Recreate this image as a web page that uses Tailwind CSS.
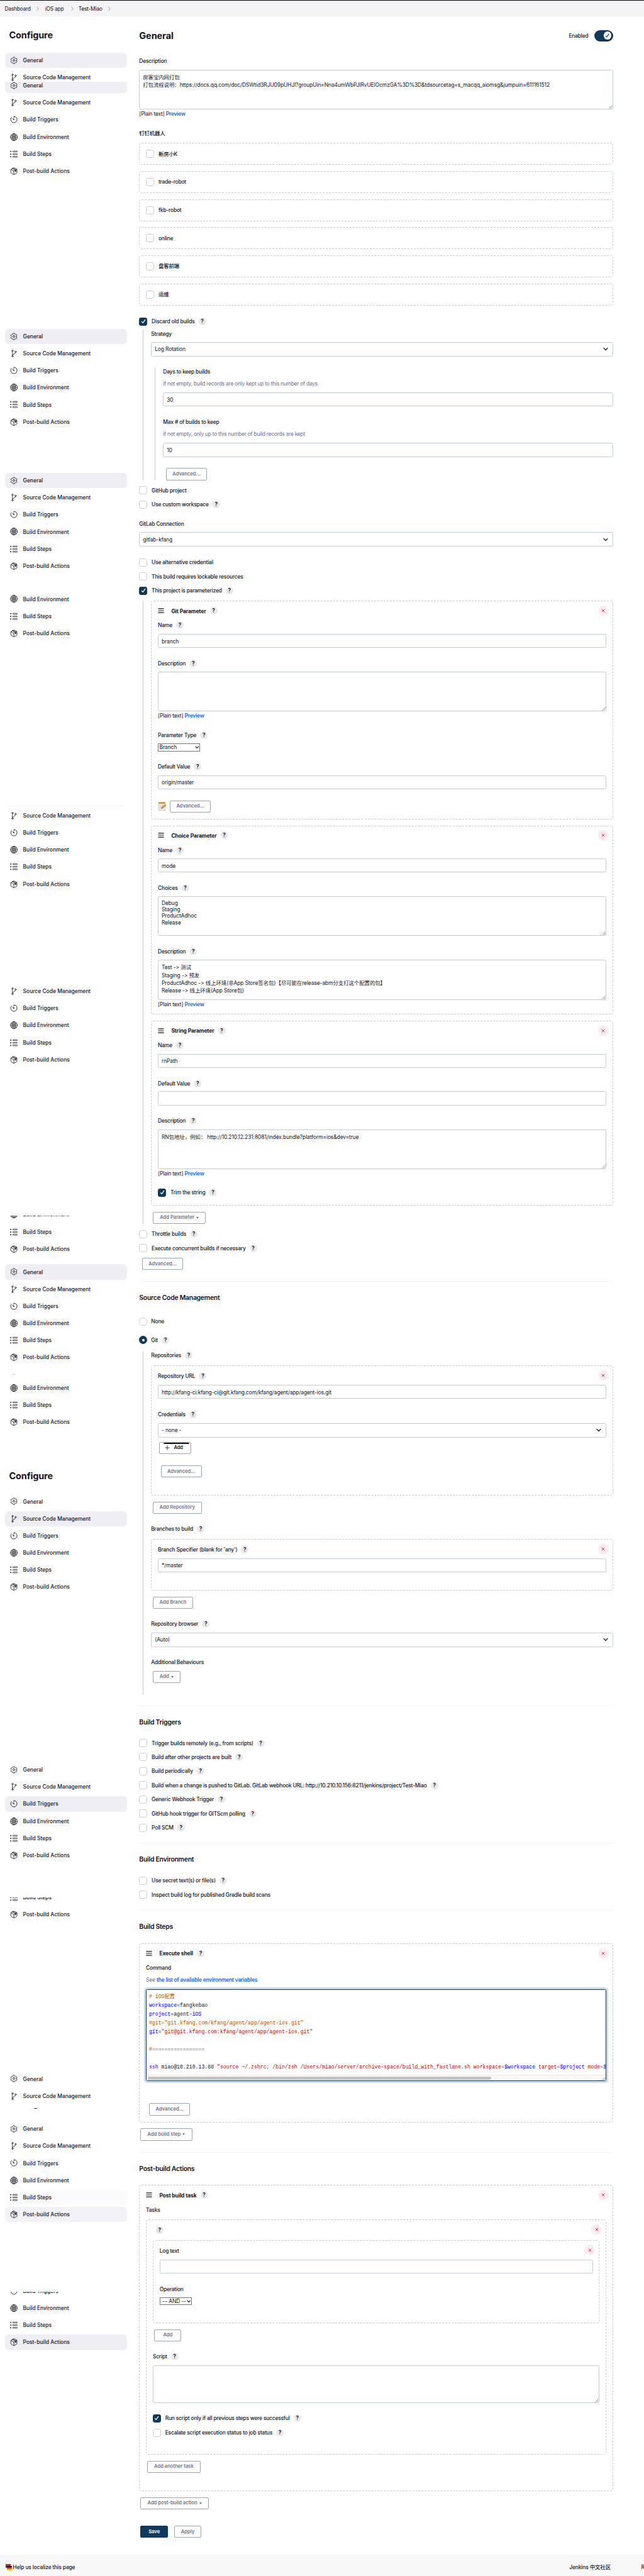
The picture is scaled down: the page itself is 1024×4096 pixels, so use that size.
<!DOCTYPE html>
<html lang="en">
<head>
<meta charset="utf-8">
<title>Test-Miao Config [Jenkins]</title>
<script src="https://cdn.jsdelivr.net/npm/@tailwindcss/browser@4"></script>
</head>
<body class="w-[1024px] h-[4096px] overflow-hidden bg-white text-[#14141f] font-['Inter','Noto_Sans_CJK_SC',sans-serif] text-[8.46px] leading-3 tracking-[-0.21px] flex flex-col">

<svg class="hidden" xmlns="http://www.w3.org/2000/svg">
  <symbol id="i-gear" viewBox="0 0 512 512"><path fill="none" stroke="currentColor" stroke-width="34" stroke-linecap="round" stroke-linejoin="round" d="M262.29 192.31a64 64 0 1057.4 57.4 64.13 64.13 0 00-57.4-57.4zM416.39 256a154.34 154.34 0 01-1.53 20.79l45.21 35.46a10.81 10.81 0 012.45 13.75l-42.77 74a10.81 10.81 0 01-13.14 4.59l-44.9-18.08a16.11 16.11 0 00-15.17 1.75A164.48 164.48 0 01325 400.8a15.94 15.94 0 00-8.82 12.14l-6.73 47.89a11.08 11.08 0 01-10.68 9.17h-85.54a11.11 11.11 0 01-10.69-8.87l-6.72-47.82a16.07 16.07 0 00-9-12.22 155.3 155.3 0 01-21.46-12.57 16 16 0 00-15.11-1.71l-44.89 18.07a10.81 10.81 0 01-13.14-4.58l-42.77-74a10.8 10.8 0 012.45-13.75l38.21-30a16.05 16.05 0 006-14.08c-.36-4.17-.58-8.33-.58-12.5s.21-8.27.58-12.35a16 16 0 00-6.07-13.94l-38.19-30A10.81 10.81 0 0149.48 186l42.77-74a10.81 10.81 0 0113.14-4.59l44.9 18.08a16.11 16.11 0 0015.17-1.75A164.48 164.48 0 01187 111.2a15.94 15.94 0 008.82-12.14l6.73-47.89A11.08 11.08 0 01213.23 42h85.54a11.11 11.11 0 0110.69 8.87l6.72 47.82a16.07 16.07 0 009 12.22 155.3 155.3 0 0121.46 12.57 16 16 0 0015.11 1.71l44.89-18.07a10.81 10.81 0 0113.14 4.58l42.77 74a10.8 10.8 0 01-2.45 13.75l-38.21 30a16.05 16.05 0 00-6.05 14.08c.33 4.14.55 8.3.55 12.47z"/></symbol>
  <symbol id="i-branch" viewBox="0 0 512 512"><g fill="none" stroke="currentColor" stroke-width="34" stroke-linecap="round"><circle cx="160" cy="70" r="46"/><circle cx="160" cy="442" r="46"/><circle cx="366" cy="140" r="46"/><path d="M160 396V116M366 186c0 130-206 70-206 210"/></g></symbol>
  <symbol id="i-timer" viewBox="0 0 512 512"><path fill="none" stroke="currentColor" stroke-width="36" stroke-linecap="round" stroke-linejoin="round" d="M96 112A210 210 0 0046 254c-1 116 94 210 210 210s210-94 210-210S374 44 258 42v92"/><path fill="currentColor" d="M233.38 278.63l-79-113a8.13 8.13 0 0111.32-11.32l113 79a32.5 32.5 0 01-37.25 53.26 33.21 33.21 0 01-8.07-7.94z"/></symbol>
  <symbol id="i-globe" viewBox="0 0 512 512"><g fill="none" stroke="currentColor" stroke-width="34"><circle cx="256" cy="256" r="232"/><ellipse cx="256" cy="256" rx="112" ry="232"/><path d="M256 24v464M24 256h464M76 126c50 34 112 54 180 54s130-20 180-54M76 386c50-34 112-54 180-54s130 20 180 54"/></g></symbol>
  <symbol id="i-steps" viewBox="0 0 512 512"><g fill="none" stroke="currentColor" stroke-width="28" stroke-linejoin="round"><rect x="172" y="46" width="324" height="64" rx="32"/><rect x="172" y="224" width="324" height="64" rx="32"/><rect x="172" y="402" width="324" height="64" rx="32"/><path d="M18 44l72 34-72 34zM18 222l72 34-72 34zM18 400l72 34-72 34z"/></g></symbol>
  <symbol id="i-cube" viewBox="0 0 512 512"><g fill="none" stroke="currentColor" stroke-width="34" stroke-linecap="round" stroke-linejoin="round"><path d="M440 130L278 34a44 44 0 00-44 0L72 130a44 44 0 00-22 38v184a44 44 0 0022 38l162 96a44 44 0 0044 0l162-96a44 44 0 0022-38V168a44 44 0 00-22-38zM58 146l198 114 198-114M256 490V260M150 80l208 120v100l44-26V172L196 56"/></g></symbol>
  <symbol id="i-check" viewBox="0 0 12 12"><path fill="none" stroke="currentColor" stroke-width="1.3" stroke-linecap="round" stroke-linejoin="round" d="M3.4 6.6L5.2 8.4 8.7 3.6"/></symbol>
  <symbol id="i-x" viewBox="0 0 12 12"><path fill="none" stroke="currentColor" stroke-width="1.6" stroke-linecap="round" d="M2 2l8 8M10 2L2 10"/></symbol>
  <symbol id="i-down" viewBox="0 0 12 12"><path fill="none" stroke="currentColor" stroke-width="2" stroke-linecap="round" stroke-linejoin="round" d="M1.5 3.5L6 8.5l4.5-5"/></symbol>
  <symbol id="i-crumb" viewBox="0 0 6 12"><path fill="none" stroke="currentColor" stroke-width="1.3" stroke-linecap="round" stroke-linejoin="round" d="M1 1.5L4.6 6 1 10.5"/></symbol>
  <symbol id="i-grip" viewBox="0 0 10 10"><path fill="none" stroke="currentColor" stroke-width="1.2" stroke-linecap="round" d="M.8 1.8h8.4M.8 5h8.4M.8 8.2h8.4"/></symbol>
  <symbol id="i-resize" viewBox="0 0 6 6"><path fill="none" stroke="#666" stroke-width=".7" d="M.5 5.5l5-5M3 5.5L5.5 3"/></symbol>
  <symbol id="i-note" viewBox="0 0 14 14"><rect x="1" y=".5" width="11" height="13" rx="1" fill="#e9e9e6" stroke="#b9b9b4" stroke-width=".6"/><rect x="1" y=".5" width="11" height="2.6" fill="#c9a227"/><path d="M3 5.5h6M3 7.5h4M3 9.5h3" stroke="#bbb" stroke-width=".6"/><path d="M5.4 10.8l.6-2 5.6-4.6 1.4 1.5-5.6 4.5z" fill="#e08a2e" stroke="#8a4b12" stroke-width=".4"/></symbol>
  <symbol id="i-lang" viewBox="0 0 10 10"><path d="M0 0h8v6H0z" fill="#2c4a9a"/><path d="M0 1.5h8M3 0v6" stroke="#e33" stroke-width="1"/><path d="M2 3h8v2.4H2z" fill="#222"/><path d="M2 5.4h8v2.3H2z" fill="#d22"/><path d="M2 7.7h8V10H2z" fill="#f2c500"/></symbol>
</svg>

<header class="h-[26.4px] shrink-0 border-t border-black bg-[#f4f4f7] flex items-center pl-[7.4px] tracking-[-0.26px]" id="crumbs"></header>

<div class="flex h-[4037px] shrink-0">
  <aside class="w-[221.3px] shrink-0 pl-[7.9px] pr-[19.4px] flex flex-col tracking-normal" id="side"></aside>
  <main class="w-[753.7px] shrink-0 flex flex-col items-stretch" id="main"></main>
</div>

<footer class="flex-1 bg-[#f8f8f8] border-t border-[#f2f2f2] flex items-center pl-[8.5px] pt-1 whitespace-nowrap font-medium tracking-[-0.15px]">
  <svg class="size-[10px] shrink-0"><use href="#i-lang"/></svg>
  <span class="ml-[1.8px] w-[885px] shrink-0">Help us localize this page</span>
  <span class="w-[114.2px] shrink-0">Jenkins 中文社区</span>
  <span class="shrink-0">REST API</span>
</footer>

<script>
const use = (id, cls) => `<svg class="${cls} shrink-0"><use href="#i-${id}"/></svg>`;
const help = (cls = 'ml-[6px]') => `<span class="${cls} size-3 rounded-full bg-[#e8e8e8] flex items-center justify-center text-[8.4px] font-semibold tracking-normal shrink-0">?</span>`;

/* ---------- breadcrumbs ---------- */
document.getElementById('crumbs').innerHTML =
  `<span class="w-[51px]">Dashboard</span>${use('crumb', 'w-[4px] h-2 text-[#8d8d98]')}
   <span class="w-[41px] ml-[9.4px]">iOS app</span>${use('crumb', 'w-[4px] h-2 text-[#8d8d98]')}
   <span class="w-[47px] ml-[7.9px]">Test-Miao</span>${use('crumb', 'w-[4px] h-2 text-[#8d8d98]')}`;

/* ---------- sidebar ---------- */
const NAV = [['gear', 'General'], ['branch', 'Source Code Management'], ['timer', 'Build Triggers'], ['globe', 'Build Environment'], ['steps', 'Build Steps'], ['cube', 'Post-build Actions']];
const item = (i, tone = '') => `<a class="h-[24.2px] my-[1.5px] shrink-0 rounded-[6px] flex items-center pl-[8.4px] font-medium ${tone}">${use(NAV[i][0], 'size-[12.2px]')}<span class="ml-[8.1px] whitespace-nowrap">${NAV[i][1]}</span></a>`;
const items = (from, to, active = -1, tone = 'bg-[#eeeef4]') => { let s = ''; for (let i = from; i <= to; i++) s += item(i, i === active ? tone : ''); return s; };
const nav = (cls, body) => `<nav class="${cls} shrink-0 overflow-hidden flex flex-col">${body}</nav>`;
const title = (cls) => `<h1 class="${cls} h-6 leading-6 shrink-0 pl-[6.6px] mb-[14.6px] text-[14.5px] font-bold tracking-[-0.16px]">Configure</h1>`;
document.getElementById('side').innerHTML =
  title('mt-[17.5px]') +
  nav('h-[48px]', items(0, 1, 0)) +
  nav('h-[155.1px] justify-end', items(0, 5, 0)) +
  nav('mt-[235.6px]', items(0, 5, 0)) +
  nav('mt-[66.1px]', items(0, 5, 0)) +
  nav('mt-[25.4px]', items(3, 5)) +
  nav('mt-[260.1px] h-[138.7px] justify-end', items(0, 5, 0)) +
  nav('mt-[143.2px]', items(1, 5)) +
  nav('mt-[234.7px] h-[66.4px] justify-end', items(3, 5)) +
  nav('mt-[9.5px]', items(0, 5, 0)) +
  nav('mt-[12.9px] h-[89.9px] justify-end', items(2, 5)) +
  title('mt-[60.5px]') +
  nav('', items(0, 5, 1)) +
  nav('mt-[263.4px]', items(0, 5, 2)) +
  nav('mt-[53.2px] h-[40.7px] justify-end', items(4, 5)) +
  nav('mt-[234.5px]', items(0, 1)) +
  nav('mt-[5.6px] h-[182.8px] justify-end', title('') + items(0, 3) + item(4, 'bg-[#fafafd]') + item(5, 'bg-[#f2f2f8]')) +
  nav('mt-[109.7px] h-[93.6px] justify-end', items(2, 5, 5));

/* ---------- form pieces ---------- */
const label = (cls, text, h) => `<div class="${cls} h-3 shrink-0 flex items-center font-medium whitespace-nowrap">${text}${h ? help() : ''}</div>`;
const hint = (cls, text) => `<div class="${cls} h-3 shrink-0 text-[#73738c] tracking-[-0.26px]">${text}</div>`;
const box = (on) => on
  ? `<span class="size-[13px] rounded-[3.4px] bg-[#10395c] text-white flex items-center justify-center shrink-0">${use('check', 'size-[12px]')}</span>`
  : `<span class="size-[13px] rounded-[3.4px] border-[1.2px] border-[#c3cdd1] bg-white shrink-0"></span>`;
const check = (cls, text, on, h) => `<label class="${cls} h-[13px] shrink-0 flex items-center font-medium whitespace-nowrap">${box(on)}<span class="ml-[6.8px]">${text}</span>${h ? help() : ''}</label>`;
const radio = (cls, text, on, h) => `<label class="${cls} h-[13px] shrink-0 flex items-center font-medium">${on
  ? '<span class="size-[13px] rounded-full bg-[#10395c] flex items-center justify-center"><i class="size-[4px] rounded-full bg-white"></i></span>'
  : '<span class="size-[13px] rounded-full border border-[#c3cdd1]"></span>'}<span class="ml-[6px]">${text}</span>${h ? help() : ''}</label>`;
const input = (cls, text = '') => `<div class="${cls} h-[22.2px] shrink-0 rounded-[2.5px] border-[1.2px] border-[#c3cdd1] flex items-center pl-[4.9px] pt-[1px] whitespace-nowrap tracking-[-0.13px]">${text}</div>`;
const area = (cls, text = '') => `<div class="${cls} shrink-0 relative rounded-[2.5px] border-[1.2px] border-[#c3cdd1] pl-[4.9px] pt-[5px] whitespace-pre tracking-[-0.1px]">${text}${use('resize', 'absolute right-0 bottom-0 size-[6px]')}</div>`;
const select = (cls, text) => `<div class="${cls} h-[23px] shrink-0 rounded-[2.5px] border-[1.2px] border-[#c3cdd1] flex items-center justify-between pl-[4.9px] pr-[7px] tracking-[-0.13px]"><span>${text}</span>${use('down', 'size-[8px]')}</div>`;
const native = (cls, text) => `<div class="${cls} shrink-0 border border-[#767676] flex items-center justify-between pl-[1.5px] pr-[1px] whitespace-nowrap tracking-[-0.13px]"><span>${text}</span>${use('down', 'size-[6.5px]')}</div>`;
const button = (cls, text, caret) => `<button class="${cls} h-[19.3px] shrink-0 self-start rounded-[2px] border-[1.2px] border-[#98a6af] bg-white text-[#73738c] text-[7.6px] font-semibold tracking-normal flex items-center justify-center whitespace-nowrap">${text}${caret ? '<i class="ml-[3px] border-x-[2.3px] border-x-transparent border-t-[3.6px] border-t-[#73738c]"></i>' : ''}</button>`;
const plain = (cls) => `<div class="${cls} h-3 shrink-0">[Plain text] <a class="text-[#1f66d6] font-semibold">Preview</a></div>`;
const del = () => `<span class="ml-auto -mr-[3.8px] size-[17px] rounded-full bg-[#fdecf0] text-[#e0002d] flex items-center justify-center">${use('x', 'size-[6px]')}</span>`;
const head = (text) => `<div class="mt-[6.2px] h-[17px] shrink-0 flex items-center">${use('grip', 'size-[10px]')}<span class="ml-[11.3px] mt-[1px] font-bold tracking-[-0.1px]">${text}</span>${help()}${del()}</div>`;
const labelHead = (cls, text, h) => `<div class="${cls} h-[17px] shrink-0 flex items-center font-medium"><span class="mt-[3px]">${text}</span>${h ? help('ml-[6px] mt-[2px]') : ''}${del()}</div>`;
const card = (cls, body) => `<section class="${cls} shrink-0 flex flex-col px-[9.8px] rounded-[4.5px] border-[1.2px] border-dashed border-[#c3cdd1]">${body}</section>`;
const nest = (cls, body) => `<div class="${cls} ml-[6.2px] pl-[11.8px] shrink-0 flex flex-col border-l-[1.2px] border-[#c3cdd1]">${body}</div>`;
const rule = (cls) => `<div class="${cls} h-[1.2px] shrink-0 bg-[#f1f1f6]"></div>`;
const h2 = (cls, text) => `<h2 class="${cls} h-[14px] leading-[14px] shrink-0 text-[10.5px] font-semibold tracking-[-0.31px]">${text}</h2>`;

/* ---------- shell script editor ---------- */
const V = 'text-[#0000ff]', S = 'text-[#aa1111]', C = 'text-[#aa5500]';
const c = (cls, t) => `<span class="${cls}">${t}</span>`;
const code = [
  c(C, '# iOS配置'),
  c(V, 'workspace') + '=fangkebao',
  c(V, 'project') + '=agent' + c('text-[#0000cc]', '-iOS'),
  c(C, '#git="git.kfang.com/kfang/agent/app/agent-ios.git"'),
  c(V, 'git') + '=' + c(S, '"git@git.kfang.com:kfang/agent/app/agent-ios.git"'),
  '',
  c(C, '#================='),
  '',
  c('text-[#3300aa]', 'ssh') + ' miao@10.210.13.88 ' + c(S, '"source ~/.zshrc; /bin/zsh /Users/miao/server/archive-space/build_with_fastlane.sh workspace=') + c(V, '$workspace') + c(S, ' target=') + c(V, '$project') + c(S, ' mode=') + c(V, '$mode')
];
const editor = (cls) => `<div class="${cls} h-[146.8px] shrink-0 relative rounded-[2.5px] border-[1.2px] border-[#10395c] ring-[3px] ring-[#cbdce7] overflow-hidden flex flex-col tracking-normal">
  <div class="flex-1 pt-[4px] pl-[3.8px] text-[8.2px] font-['Liberation_Mono','Noto_Sans_CJK_SC',monospace]">${code.map(l => `<div class="h-[14.02px] leading-[14px] whitespace-pre">${l}</div>`).join('')}</div>
  <div class="h-[9px] bg-[#fafafa] border-t border-[#e8e8e8] pl-[2.4px] flex items-center"><i class="w-[546px] h-[5px] rounded-full bg-[#c3c3c3]"></i></div>
  ${use('resize', 'absolute right-0 bottom-0 size-[6px]')}</div>`;

/* ---------- main form ---------- */
document.getElementById('main').innerHTML = [
  `<div class="mt-[21.3px] h-[18px] shrink-0 flex items-center"><h1 class="text-[14.5px] font-bold tracking-[-0.09px] mt-[1px]">General</h1><span class="ml-auto mr-[9.5px] font-medium">Enabled</span><span class="w-[30px] h-[18px] rounded-full bg-[#10395c] flex items-center justify-end pr-[2.8px]"><i class="size-[12.4px] rounded-full bg-white text-[#10395c] flex items-center justify-center">${use('check', 'size-[11px]')}</i></span></div>`,
  label('mt-[25.5px]', 'Description'),
  area('mt-[7.5px] h-[63.1px] leading-[12.1px]', '房客宝内网打包\n打包流程说明：https://docs.qq.com/doc/DSWtid3RJU09pUHJl?groupUin=Nna4umWbPJIRvUEIOcmzGA%3D%3D&amp;tdsourcetag=s_macqq_aiomsg&amp;jumpuin=611161512'),
  plain('mt-[1px]'),
  label('mt-[18.8px]', '钉钉机器人'),
  `<div class="mt-[9.6px] flex flex-col gap-[9.7px]">${['新房小K', 'trade-robot', 'fkb-robot', 'online', '盘客前端', '运维'].map(t => card('h-[35px] justify-center', check('', t))).join('')}</div>`,
  check('mt-[19px]', 'Discard old builds', true, true),
  nest('mt-[6.2px] h-[239.8px]',
    label('mt-[1.1px]', 'Strategy') +
    select('mt-[6.9px]', 'Log Rotation') +
    nest('mt-[17.4px] h-[179.4px]',
      label('mt-[0.9px]', 'Days to keep builds') +
      hint('mt-[6.5px]', 'if not empty, build records are only kept up to this number of days') +
      input('mt-[8.6px]', '30') +
      label('mt-[19.1px]', 'Max # of builds to keep') +
      hint('mt-[6.8px]', 'if not empty, only up to this number of build records are kept') +
      input('mt-[8.2px]', '10') +
      button('mt-[17.6px] ml-[4.6px] w-[65.3px]', 'Advanced...'))),
  check('mt-[9.5px]', 'GitHub project'),
  check('mt-[9.9px]', 'Use custom workspace', false, true),
  label('mt-[18.4px]', 'GitLab Connection'),
  select('mt-[7px]', 'gitlab-kfang'),
  check('mt-[18.4px]', 'Use alternative credential'),
  check('mt-[9.5px]', 'This build requires lockable resources'),
  check('mt-[9.4px]', 'This project is parameterized', true, true),
  nest('mt-[9.8px] h-[990.3px]',
    card('h-[347.1px]',
      head('Git Parameter') +
      label('mt-[8.8px]', 'Name', true) +
      input('mt-[7.5px]', 'branch') +
      label('mt-[18.5px]', 'Description', true) +
      area('mt-[7px] h-[63.2px]') +
      plain('mt-[1.2px]') +
      label('mt-[18.7px]', 'Parameter Type', true) +
      native('mt-[7.2px] h-[12.8px] w-[67.3px]', 'Branch') +
      label('mt-[18.7px]', 'Default Value', true) +
      input('mt-[7.3px]', 'origin/master') +
      `<div class="mt-[17.8px] flex items-center">${use('note', 'size-[14px]')}${button('ml-[5px] w-[65.3px]', 'Advanced...')}</div>`) +
    card('mt-[10.1px] h-[300.7px]',
      head('Choice Parameter') +
      label('mt-[8.8px]', 'Name', true) +
      input('mt-[7.6px]', 'mode') +
      label('mt-[18.4px]', 'Choices', true) +
      area('mt-[7.1px] h-[63.1px] leading-[10.3px]', 'Debug\nStaging\nProductAdhoc\nRelease') +
      label('mt-[19.2px]', 'Description', true) +
      area('mt-[7.3px] h-[63.3px] leading-[12.15px]', 'Test -&gt; 测试\nStaging -&gt; 预发\nProductAdhoc -&gt; 线上环境(非App Store签名包)【尽可能在release-abm分支打这个配置的包】\nRelease -&gt; 线上环境(App Store包)') +
      plain('mt-[1px]')) +
    card('mt-[9.9px] h-[293.5px]',
      head('String Parameter') +
      label('mt-[8.8px]', 'Name', true) +
      input('mt-[7.5px]', 'rnPath') +
      label('mt-[18.7px]', 'Default Value', true) +
      input('mt-[6.8px]') +
      label('mt-[18.7px]', 'Description', true) +
      area('mt-[7.6px] h-[63.3px] leading-[12.15px]', 'RN包地址，例如： http://10.210.12.231:8081/index.bundle?platform=ios&amp;dev=true') +
      plain('mt-[1px]') +
      check('mt-[17.8px]', 'Trim the string', true, true)) +
    button('mt-[9.9px] ml-[2.7px] w-[84.2px]', 'Add Parameter', true)),
  check('mt-[9.9px]', 'Throttle builds', false, true),
  check('mt-[9.5px]', 'Execute concurrent builds if necessary', false, true),
  button('mt-[9px] ml-[4.7px] w-[65.3px]', 'Advanced...'),

  rule('mt-[17.7px]'),
  h2('mt-[18.5px]', 'Source Code Management'),
  radio('mt-[24px]', 'None'),
  radio('mt-[16.6px]', 'Git', true, true),
  nest('mt-[11.5px] h-[545.2px]',
    label('mt-[0.3px]', 'Repositories', true) +
    card('mt-[10.1px] h-[206.8px]',
      labelHead('mt-[6.1px]', 'Repository URL', true) +
      input('mt-[6.8px]', 'http://kfang-ci:kfang-ci@git.kfang.com/kfang/agent/app/agent-ios.git') +
      label('mt-[18.9px]', 'Credentials', true) +
      select('mt-[7.4px]', '- none -') +
      `<button class="mt-[7px] ml-[2px] w-[51px] h-[19.5px] shrink-0 rounded-[2px] border-[1.2px] border-[#98a6af] flex flex-col"><i class="ml-[6px] mr-[2px] h-[2.8px] self-stretch rounded-t-full bg-[#14141f]"></i><span class="flex items-center pl-[8px] text-[7.6px] font-semibold"><svg class="size-[8px]" viewBox="0 0 8 8"><path d="M4 .4v7.2M.4 4h7.2" stroke="currentColor" stroke-width=".8"/></svg><span class="ml-[6.4px]">Add</span></span></button>` +
      button('mt-[18px] ml-[4.6px] w-[65.3px]', 'Advanced...')) +
    button('mt-[9.6px] ml-[2.7px] w-[77.7px]', 'Add Repository') +
    label('mt-[18.2px]', 'Branches to build', true) +
    card('mt-[9.7px] h-[82px]',
      labelHead('mt-[6.3px]', "Branch Specifier (blank for 'any')", true) +
      input('mt-[6.7px]', '*/master')) +
    button('mt-[9.8px] ml-[2.7px] w-[64px]', 'Add Branch') +
    label('mt-[18.2px]', 'Repository browser', true) +
    select('mt-[7.5px]', '(Auto)') +
    label('mt-[18.8px]', 'Additional Behaviours') +
    button('mt-[7.2px] ml-[2.7px] w-[43.7px]', 'Add', true)),

  rule('mt-[17.5px]'),
  h2('mt-[18.9px]', 'Build Triggers'),
  check('mt-[19.4px]', 'Trigger builds remotely (e.g., from scripts)', false, true),
  check('mt-[9.4px]', 'Build after other projects are built', false, true),
  check('mt-[9.4px]', 'Build periodically', false, true),
  check('mt-[9.4px]', 'Build when a change is pushed to GitLab. GitLab webhook URL: http://10.210.10.156:8211/jenkins/project/Test-Miao', false, true),
  check('mt-[9.4px]', 'Generic Webhook Trigger', false, true),
  check('mt-[9.7px]', 'GitHub hook trigger for GITScm polling', false, true),
  check('mt-[9.4px]', 'Poll SCM', false, true),

  rule('mt-[17.6px]'),
  h2('mt-[19px]', 'Build Environment'),
  check('mt-[19.3px]', 'Use secret text(s) or file(s)', false, true),
  check('mt-[9.4px]', 'Inspect build log for published Gradle build scans'),

  rule('mt-[17.9px]'),
  h2('mt-[18.9px]', 'Build Steps'),
  card('mt-[18.9px] h-[284.7px]',
    head('Execute shell') +
    label('mt-[9.1px]', 'Command') +
    `<div class="mt-[6.9px] h-3 shrink-0 text-[#73738c]">See <a class="text-[#1f66d6] font-semibold">the list of available environment variables</a></div>` +
    editor('mt-[8.3px]') +
    button('mt-[35px] ml-[5px] w-[65.3px]', 'Advanced...')),
  button('mt-[9.6px] ml-[2px] w-[82.3px]', 'Add build step', true),

  rule('mt-[18.2px]'),
  h2('mt-[18.8px]', 'Post-build Actions'),
  card('mt-[18.7px] h-[486.6px]',
    head('Post build task') +
    label('mt-[9.2px]', 'Tasks') +
    card('mt-[9.6px] h-[373.6px]',
      `<div class="mt-[6.1px] h-[17px] shrink-0 flex items-center">${help('ml-[5px] mt-[2px]')}${del()}</div>` +
      card('mt-[8.5px] h-[131.7px]',
        labelHead('mt-[6.3px]', 'Log text') +
        input('mt-[6.7px]') +
        label('mt-[18.9px]', 'Operation') +
        native('mt-[6.6px] h-[12.6px] w-[51.6px]', '&nbsp;-- AND --')) +
      button('mt-[9.9px] ml-[2.5px] w-[43px]', 'Add') +
      label('mt-[18.5px]', 'Script', true) +
      area('mt-[7.7px] h-[59.8px]') +
      check('mt-[17.7px]', 'Run script only if all previous steps were successful', true, true) +
      check('mt-[10px]', 'Escalate script execution status to job status', false, true)) +
    button('mt-[9.7px] ml-[2.2px] w-[84.3px]', 'Add another task')),
  button('mt-[9.6px] ml-[2px] w-[108.5px]', 'Add post-build action', true),
  `<div class="mt-[26.1px] ml-[2px] flex gap-[9.9px]"><button class="w-[43.7px] h-[19.3px] rounded-[2px] bg-[#10395c] text-white text-[7.6px] font-semibold tracking-normal">Save</button>${button('w-[43.1px]', 'Apply')}</div>`
].join('');
</script>
</body>
</html>
